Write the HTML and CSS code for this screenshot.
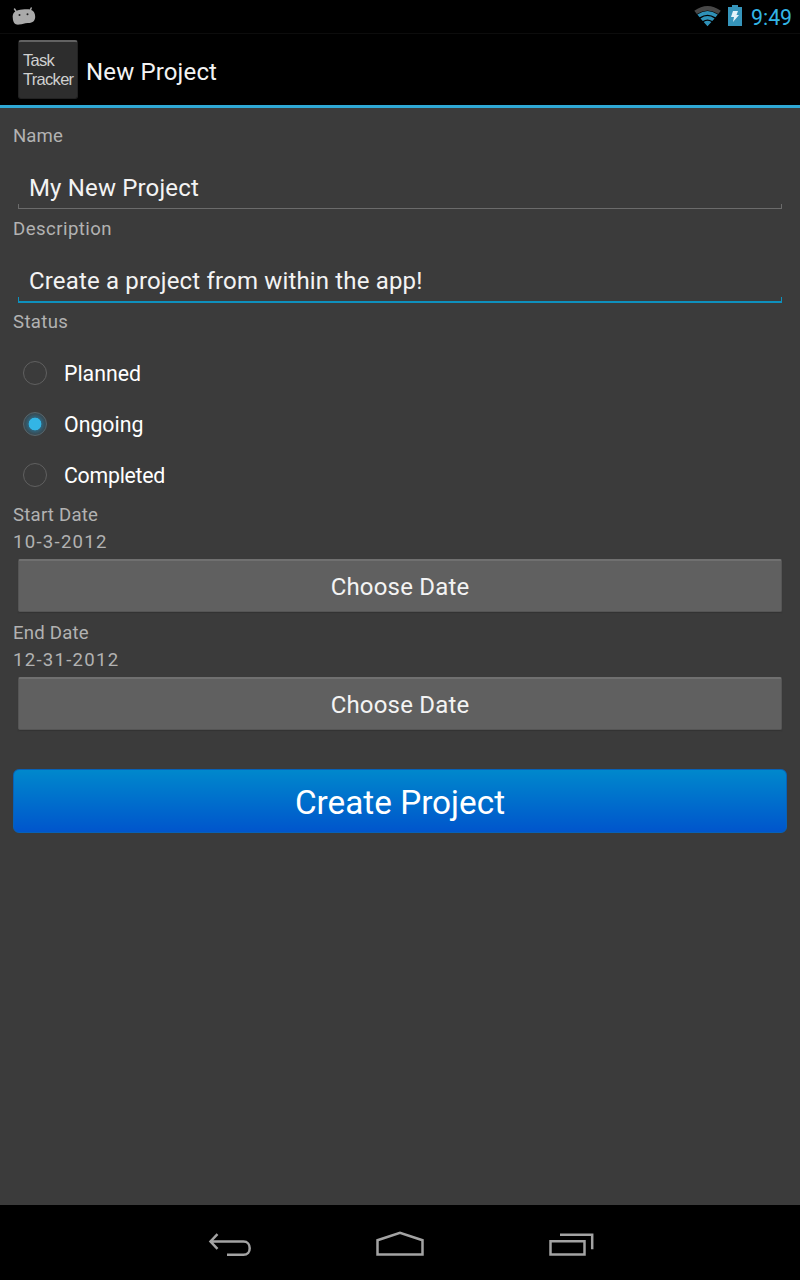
FILE: index.html
```html
<!DOCTYPE html>
<html lang="en">
<head>
<meta charset="utf-8">
<title>New Project</title>
<link rel="stylesheet" href="styles.css">
</head>
<body>
<div class="screen">
  <header class="status-bar">
    <svg class="robot" width="24" height="20" viewBox="0 0 24 20">
      <path d="M2.500 2 4.500 5M19.200 1 18 4" stroke="#aaa" stroke-width="1.500" stroke-linecap="round"/>
      <path d="M.8 11C.3 6.500 2.500 4.200 6 3.200 10 2.200 15 2 18 2.400 21.500 3.200 23.300 6 23.200 10 23 14.500 20 16 16 16 12.500 15.900 11 17.300 7 17.600 3 18 1 15.500.8 11Z" fill="#aaa"/>
      <circle cx="7.500" cy="8" r="1" fill="#222"/><circle cx="15.500" cy="7.200" r="1" fill="#222"/>
    </svg>
    <div class="status-icons">
      <svg class="wifi" width="28" height="21" viewBox="0 0 28 21">
        <path d="M.3 4.800Q13.500-4.600 26.800 4.800L24.300 8Q13.500 1 2.800 8Z" fill="#484848"/>
        <path d="M3.300 8.600Q13.500 1.500 23.800 8.600L21.500 11.300Q13.500 6 5.600 11.300ZM6.500 12.400Q13.500 7.600 20.600 12.400L18.300 15Q13.500 12 8.800 15ZM9.700 16Q13.500 13.600 17.400 16L13.500 20.300Z" fill="#2f91b8"/>
      </svg>
      <svg class="battery" width="14" height="22" viewBox="0 0 14 22">
        <path d="M4 0h6v2h4v19H0V2h4Z" fill="#3695bb"/>
        <path d="M5 6h5L8.500 10H11L5 17 6 12H3Z" fill="#e4f3fa"/>
      </svg>
      <span class="clock">9:49</span>
    </div>
  </header>
  <div class="action-bar">
    <div class="app-icon"><span>Task</span><span>Tracker</span></div>
    <h1 class="title">New Project</h1>
  </div>
  <main class="form">
    <div class="label">Name</div>
    <div class="field"><span>My New Project</span></div>
    <div class="label desc">Description</div>
    <div class="field focused"><span>Create a project from within the app!</span></div>
    <div class="label status">Status</div>
    <div class="radios">
      <div class="option"><i class="radio"></i><span>Planned</span></div>
      <div class="option"><i class="radio checked"></i><span>Ongoing</span></div>
      <div class="option completed"><i class="radio"></i><span>Completed</span></div>
    </div>
    <div class="label heading">Start Date</div>
    <div class="label date">10-3-2012</div>
    <div class="picker">Choose Date</div>
    <div class="label heading">End Date</div>
    <div class="label date">12-31-2012</div>
    <div class="picker">Choose Date</div>
    <div class="create">Create Project</div>
  </main>
  <nav class="nav-bar">
    <svg width="48" height="32" viewBox="-2.500 0 48 32" fill="none" stroke="#a3a3a3" stroke-width="2.500">
      <path d="M3 12.500H36C40 12.500 42.200 15.500 42.200 19.200 42.200 23 40 25.800 36 25.800H19.500M10 5.200 3 12.500 10 19.800"/>
    </svg>
    <svg width="50" height="32" viewBox="0 0 50 32" fill="none" stroke="#a3a3a3" stroke-width="2.500">
      <path d="M2.500 25.500V11.200L25 3.800 47.500 11.200V25.500Z"/>
    </svg>
    <svg width="48" height="32" viewBox="0 0 48 32" fill="none" stroke="#a3a3a3" stroke-width="2.500">
      <path d="M3.500 12.200H37.500V25.500H3.500ZM13 5.700H45.200V20.200"/>
    </svg>
  </nav>
</div>
</body>
</html>
```
FILE: styles.css
```css
* { box-sizing: border-box; }
body { margin: 0; background: #000; }
.screen {
  width: 800px;
  height: 1280px;
  display: flex;
  flex-direction: column;
  background: #3b3b3b;
  font-family: Roboto, sans-serif;
  color: #f3f3f3;
  overflow: hidden;
}
.status-bar {
  height: 34px;
  display: flex;
  justify-content: space-between;
  padding: 0 9px 0 12px;
  background: #000;
  border-bottom: 1px solid #0c0c0c;
}
.robot { margin-top: 7px; }
.status-icons { display: flex; align-items: flex-start; }
.wifi { margin-top: 6px; }
.battery { margin: 5px 9px 0 6px; }
.clock { font-size: 21.3px; line-height: 36px; color: #33b5e5; width: 40px; white-space: nowrap; }
.action-bar {
  height: 74px;
  display: flex;
  align-items: flex-start;
  padding: 6px 18px 0;
  background: #000;
  border-bottom: 3px solid #2fa8d5;
}
.app-icon {
  width: 60px;
  height: 59px;
  padding: 9px 0 0 4px;
  display: flex;
  flex-direction: column;
  border: 1px solid #222;
  border-top: 2px solid #626262;
  border-radius: 3px;
  background: #2d2d2d;
  color: #d0d0d0;
  font: 16.5px/19px "Liberation Sans", sans-serif;
  letter-spacing: -0.7px;
}
.title { margin: 0 0 0 8px; font-size: 24px; font-weight: 400; line-height: 64px; letter-spacing: 0.15px; }
.form { flex: 1; padding: 14px 13px 0; }
.label { height: 27px; font-size: 18.6px; line-height: 28px; color: #b2b2b2; letter-spacing: 0.1px; }
.desc { letter-spacing: 0.45px; }
.status { letter-spacing: 0.35px; }
.heading { letter-spacing: 0.22px; }
.date { letter-spacing: 1.25px; }
.field {
  position: relative;
  height: 60px;
  margin: 0 5px 6px;
  padding: 14px 11px 0;
  font-size: 24px;
  line-height: 50px;
  letter-spacing: 0.16px;
  border-bottom: 1px solid #6b6b6b;
}
.field::after {
  content: "";
  position: absolute;
  inset: auto 0 0 0;
  height: 4px;
  border: solid #6b6b6b;
  border-width: 0 1px;
}
.focused { height: 61px; margin-bottom: 5px; border-bottom: 2px solid #0e90bd; }
.focused::after { border-color: #0e90bd; border-width: 0 1.5px; }
.radios { margin: 13px 0 0; }
.option { height: 51px; display: flex; align-items: center; padding-left: 9.5px; font-size: 21.3px; color: #fff; }
.completed { letter-spacing: -0.25px; }
.radio { width: 24px; height: 24px; margin: -2px 17.5px 0 0; border: 1.5px solid #606060; border-radius: 50%; }
.checked {
  border-color: #56646a;
  background: radial-gradient(circle, #33b5e5 0 6px, #30637a 6.7px, #384d57 10px);
}
.picker {
  height: 53px;
  margin: 4px 5px 7px;
  border: solid #555;
  border-width: 2px 1px 1px;
  border-top-color: #707070;
  border-radius: 2px;
  background: #606060;
  box-shadow: 0 1px 1px #333;
  font-size: 24px;
  line-height: 52px;
  letter-spacing: 0.18px;
  text-align: center;
}
.create {
  height: 64px;
  margin-top: 39px;
  border: 1px solid #0761b7;
  border-radius: 6px;
  background: linear-gradient(#0088cc, #0055cc);
  color: #fff;
  font-size: 33.3px;
  line-height: 66px;
  text-align: center;
}
.nav-bar {
  height: 75px;
  display: flex;
  justify-content: center;
  gap: 122px;
  padding-top: 24px;
  background: #000;
}
```
